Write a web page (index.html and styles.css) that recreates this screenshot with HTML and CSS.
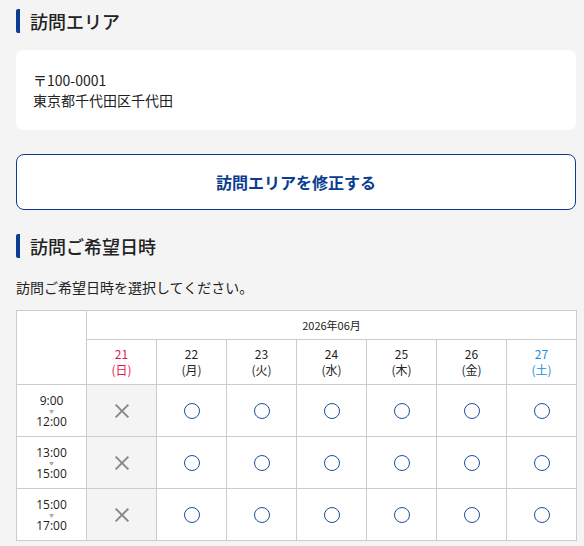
FILE: index.html
```html
<!DOCTYPE html>
<html lang="ja">
<head>
<meta charset="utf-8">
<link rel="stylesheet" href="styles.css">
</head>
<body>
<div class="page">
  <h2 class="heading">訪問エリア</h2>
  <div class="card">
    <p>〒100-0001</p>
    <p>東京都千代田区千代田</p>
  </div>
  <button class="btn">訪問エリアを修正する</button>
  <h2 class="heading heading-2">訪問ご希望日時</h2>
  <p class="lead">訪問ご希望日時を選択してください。</p>
  <table class="cal">
    <colgroup>
      <col class="c"><col class="c"><col class="c"><col class="c"><col class="c"><col class="c"><col class="c"><col class="c">
    </colgroup>
    <thead>
      <tr class="month-row">
        <th rowspan="2" class="corner"></th>
        <th colspan="7" class="month">2026年06月</th>
      </tr>
      <tr class="day-row">
        <th class="sun">21<br>(日)</th>
        <th>22<br>(月)</th>
        <th>23<br>(火)</th>
        <th>24<br>(水)</th>
        <th>25<br>(木)</th>
        <th>26<br>(金)</th>
        <th class="sat">27<br>(土)</th>
      </tr>
    </thead>
    <tbody>
      <tr>
        <td class="time"><span>9:00</span><span class="arrow">▼</span><span>12:00</span></td>
        <td class="off"><span class="x"></span></td>
        <td><span class="o"></span></td><td><span class="o"></span></td><td><span class="o"></span></td><td><span class="o"></span></td><td><span class="o"></span></td><td><span class="o"></span></td>
      </tr>
      <tr>
        <td class="time"><span>13:00</span><span class="arrow">▼</span><span>15:00</span></td>
        <td class="off"><span class="x"></span></td>
        <td><span class="o"></span></td><td><span class="o"></span></td><td><span class="o"></span></td><td><span class="o"></span></td><td><span class="o"></span></td><td><span class="o"></span></td>
      </tr>
      <tr>
        <td class="time"><span>15:00</span><span class="arrow">▼</span><span>17:00</span></td>
        <td class="off"><span class="x"></span></td>
        <td><span class="o"></span></td><td><span class="o"></span></td><td><span class="o"></span></td><td><span class="o"></span></td><td><span class="o"></span></td><td><span class="o"></span></td>
      </tr>
    </tbody>
  </table>
</div>
</body>
</html>
```
FILE: styles.css
```css
html, body {
  margin: 0;
  padding: 0;
  background: #f4f4f4;
}
body {
  font-family: "Noto Sans CJK JP", "Noto Sans", sans-serif;
  color: #222;
}
.page {
  padding: 8px 8px 0 16px;
}
.heading {
  margin: 1px 0 0;
  border-left: 4px solid #0a3d91;
  border-radius: 2px;
  padding-left: 10px;
  height: 24px;
  line-height: 24px;
  font-size: 18px;
  font-weight: 500;
  color: #222;
}
.heading-2 {
  margin-top: 24px;
}
.card {
  margin-top: 17px;
  background: #fff;
  border-radius: 8px;
  padding: 20px 17px;
  height: 40px;
}
.card p {
  margin: 0;
  font-size: 14px;
  line-height: 20px;
}
.btn {
  display: block;
  margin-top: 24px;
  width: 560px;
  height: 56px;
  background: #fff;
  border: 1px solid #0a3d91;
  border-radius: 8px;
  font-family: inherit;
  font-size: 16px;
  font-weight: 700;
  color: #0a3d91;
  padding: 0;
}
.lead {
  margin: 19px 0 0;
  font-size: 14px;
  line-height: 20px;
}
.cal {
  margin-top: 13px;
  border-collapse: collapse;
  table-layout: fixed;
  width: 561px;
  background: #fff;
}
.cal col.c {
  width: 70px;
}
.cal th, .cal td {
  border: 1px solid #ccc;
  padding: 0;
  text-align: center;
  font-weight: 400;
}
.month-row th {
  height: 28px;
}
.month {
  font-size: 11px;
  color: #222;
}
.day-row th {
  height: 44px;
  font-size: 12px;
  line-height: 16px;
  color: #222;
}
.day-row th.sun {
  color: #e6134d;
}
.day-row th.sat {
  color: #1a8fe0;
}
.cal td {
  height: 51px;
}
.time {
  font-family: "Open Sans", "Noto Sans CJK JP", sans-serif;
  font-size: 12px;
  line-height: 13px;
  color: #222;
}
.time span {
  display: block;
}
.time .arrow {
  font-size: 5px;
  line-height: 8px;
  color: #aaa;
}
.off {
  background: #f4f4f4;
}
.x {
  display: block;
  position: relative;
  width: 16px;
  height: 16px;
  margin: 0 auto;
}
.x::before, .x::after {
  content: "";
  position: absolute;
  left: -1px;
  top: 7px;
  width: 18px;
  height: 2px;
  background: #888;
  transform: rotate(45deg);
}
.x::after {
  transform: rotate(-45deg);
}
.o {
  display: block;
  margin: 0 auto;
  width: 14px;
  height: 14px;
  border: 1.5px solid #1e4f9c;
  border-radius: 50%;
}
```
